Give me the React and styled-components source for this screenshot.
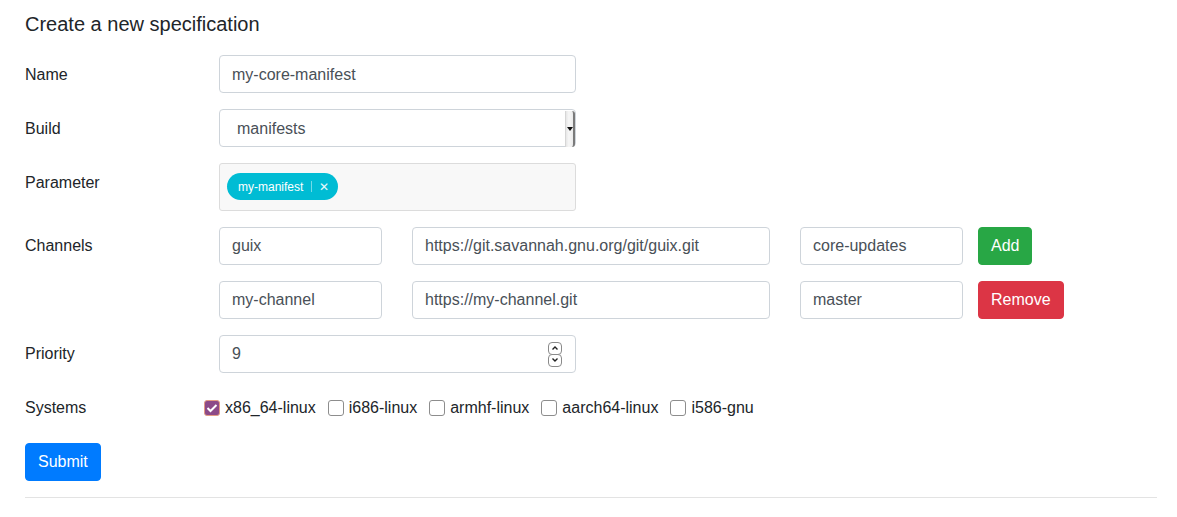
import React from "react";
import styled, { createGlobalStyle } from "styled-components";

const GlobalStyle = createGlobalStyle`
  body {
    margin: 0;
    background: #fff;
    font-family: "Liberation Sans", Arial, sans-serif;
    font-size: 16px;
    line-height: 1.5;
    color: #212529;
  }
  * { box-sizing: border-box; }
`;

const Page = styled.div`
  padding: 12px 20px 0 25px;
`;

const Title = styled.h4`
  margin: 0 0 19px;
  font-size: 20px;
  font-weight: 400;
  line-height: 24px;
  color: #212529;
`;

const Row = styled.div`
  display: flex;
  align-items: flex-start;
  margin-bottom: 16px;
`;

const Label = styled.div`
  width: 194px;
  flex: none;
  padding-top: ${(p) => p.$pt || 7}px;
  line-height: 24px;
`;

const Fields = styled.div`
  display: flex;
  align-items: flex-start;
  gap: 30px;
`;

const Input = styled.div`
  width: ${(p) => p.$w || 357}px;
  height: 38px;
  flex: none;
  display: flex;
  align-items: center;
  padding: ${(p) => p.$pt || 0}px ${(p) => p.$pad || 12}px 0;
  border: 1px solid #ced4da;
  border-radius: 4px;
  background: #fff;
  color: #495057;
  line-height: 24px;
`;

const Grow = styled.span`
  flex: 1;
`;

const SelectHandle = styled.div`
  width: 10px;
  height: 36px;
  margin-right: -17px;
  margin-left: 4px;
  display: flex;
  align-items: center;
  justify-content: center;
  background: linear-gradient(to right, #e6e6e6, #f7f7f7 40%, #eaeaea);
  border-left: 1px solid #d6d6d6;
  border-right: 2px solid #7a7a7a;
  border-radius: 0 3px 3px 0;
`;

const Triangle = styled.span`
  width: 0;
  height: 0;
  border-left: 3px solid transparent;
  border-right: 3px solid transparent;
  border-top: 4px solid #111;
`;

const TagBox = styled.div`
  width: 357px;
  height: 48px;
  display: flex;
  align-items: center;
  padding: 0 7px 1px;
  background: #f8f8f8;
  border: 1px solid #dcdcdc;
  border-radius: 3px;
`;

const Tag = styled.span`
  display: inline-flex;
  align-items: center;
  height: 27px;
  padding: 0 9px 0 11px;
  border-radius: 14px;
  background: #00bcd4;
  color: #fff;
  font-size: 12px;
  line-height: 1;
`;

const TagSep = styled.span`
  width: 1px;
  height: 11px;
  margin: 0 7px 0 8px;
  background: rgba(255, 255, 255, 0.45);
`;

const TagClose = styled.span`
  font-size: 12px;
  color: #e8f9fc;
`;

const Button = styled.button`
  height: 38px;
  flex: none;
  margin-left: ${(p) => p.$ml || 0}px;
  padding: 0 12px;
  border: 1px solid ${(p) => p.$bg};
  border-radius: 4px;
  background: ${(p) => p.$bg};
  color: #fff;
  font-family: inherit;
  font-size: 16px;
  line-height: 24px;
`;

const Spinner = styled.div`
  display: flex;
  flex-direction: column;
  margin-right: 1px;
`;

const SpinBtn = styled.span`
  width: 14px;
  height: 13px;
  display: flex;
  align-items: center;
  justify-content: center;
  border: 1px solid #8a8a8a;
  border-radius: 4px;
  background: #fff;
  & + & { margin-top: -1px; }
`;

const Checks = styled.div`
  display: flex;
  align-items: center;
  height: 38px;
  margin-left: -15px;
`;

const Check = styled.label`
  display: inline-flex;
  align-items: center;
  margin-right: 12px;
  line-height: 24px;
`;

const Box = styled.span`
  width: 16px;
  height: 16px;
  margin-right: 5px;
  display: inline-flex;
  align-items: center;
  justify-content: center;
  border-radius: 3px;
  border: 1px solid ${(p) => (p.$on ? "#e39b83" : "#8d8d8d")};
  background: ${(p) => (p.$on ? "#8c4a88" : "#fff")};
`;

const Rule = styled.hr`
  margin: 16px 0 0;
  border: 0;
  border-top: 1px solid #e3e3e3;
`;

const Chevron = ({ up }) => (
  <svg width="8" height="6" viewBox="0 0 8 6">
    <path
      d={up ? "M1.5 4.5 L4 2 L6.5 4.5" : "M1.5 1.5 L4 4 L6.5 1.5"}
      fill="none"
      stroke="#222"
      strokeWidth="1.4"
    />
  </svg>
);

const systems = ["x86_64-linux", "i686-linux", "armhf-linux", "aarch64-linux", "i586-gnu"];

export default function App() {
  return (
    <Page>
      <GlobalStyle />
      <Title>Create a new specification</Title>

      <Row>
        <Label $pt={8}>Name</Label>
        <Input $pt={2}>my-core-manifest</Input>
      </Row>

      <Row>
        <Label $pt={8}>Build</Label>
        <Input $pad={17} $pt={2}>
          <Grow>manifests</Grow>
          <SelectHandle>
            <Triangle />
          </SelectHandle>
        </Input>
      </Row>

      <Row>
        <Label $pt={8}>Parameter</Label>
        <TagBox>
          <Tag>
            my-manifest
            <TagSep />
            <TagClose>✕</TagClose>
          </Tag>
        </TagBox>
      </Row>

      <Row>
        <Label>Channels</Label>
        <Fields>
          <Input $w={163}>guix</Input>
          <Input $w={358}>https://git.savannah.gnu.org/git/guix.git</Input>
          <Input $w={163}>core-updates</Input>
        </Fields>
        <Button $bg="#28a745" $ml={15}>Add</Button>
      </Row>

      <Row>
        <Label />
        <Fields>
          <Input $w={163}>my-channel</Input>
          <Input $w={358}>https://my-channel.git</Input>
          <Input $w={163}>master</Input>
        </Fields>
        <Button $bg="#dc3545" $ml={15}>Remove</Button>
      </Row>

      <Row>
        <Label>Priority</Label>
        <Input>
          <Grow>9</Grow>
          <Spinner>
            <SpinBtn><Chevron up /></SpinBtn>
            <SpinBtn><Chevron /></SpinBtn>
          </Spinner>
        </Input>
      </Row>

      <Row>
        <Label>Systems</Label>
        <Checks>
          {systems.map((s, i) => (
            <Check key={s}>
              <Box $on={i === 0}>
                {i === 0 && (
                  <svg width="12" height="10" viewBox="0 0 12 10">
                    <path d="M1.5 5 L4.5 8 L10.5 2" fill="none" stroke="#fff" strokeWidth="2" />
                  </svg>
                )}
              </Box>
              {s}
            </Check>
          ))}
        </Checks>
      </Row>

      <Button $bg="#007bff">Submit</Button>
      <Rule />
    </Page>
  );
}
